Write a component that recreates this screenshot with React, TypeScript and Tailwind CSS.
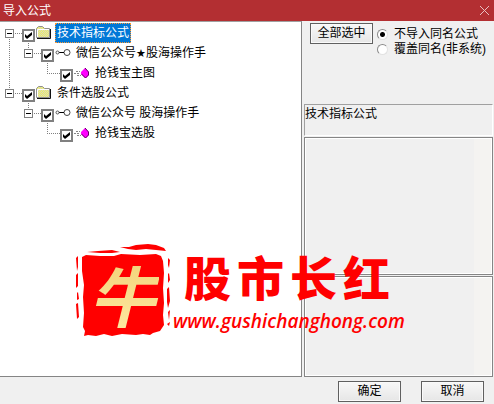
import { useState } from "react";

type NodeKind = "folder" | "group" | "formula";

interface Row {
  id: string;
  depth: number;
  kind: NodeKind;
  label: string;
  guide: boolean;
  up: boolean;
  down: boolean;
}

const rows: Row[] = [
  { id: "tech", depth: 0, kind: "folder", label: "技术指标公式", guide: false, up: false, down: true },
  { id: "tech-group", depth: 1, kind: "group", label: "微信公众号★股海操作手", guide: true, up: true, down: false },
  { id: "tech-main", depth: 2, kind: "formula", label: "抢钱宝主图", guide: true, up: true, down: false },
  { id: "cond", depth: 0, kind: "folder", label: "条件选股公式", guide: false, up: true, down: false },
  { id: "cond-group", depth: 1, kind: "group", label: "微信公众号 股海操作手", guide: false, up: true, down: false },
  { id: "cond-pick", depth: 2, kind: "formula", label: "抢钱宝选股", guide: false, up: true, down: false },
];

const dotted = { stroke: "#808080", strokeDasharray: "1 1", shapeRendering: "crispEdges" as const };

function Guide({ line }: { line: boolean }) {
  return (
    <svg className="w-[19px] h-5 shrink-0" viewBox="0 0 19 20" aria-hidden="true">
      {line && <path d="M9.5 0V20" {...dotted} />}
    </svg>
  );
}

function Branch({ row }: { row: Row }) {
  const leaf = row.kind === "formula";
  return (
    <svg className="w-[22px] h-5 shrink-0" viewBox="0 0 22 20" aria-hidden="true">
      {row.up && <path d="M9.5 0V10" {...dotted} />}
      {row.down && <path d="M9.5 10V20" {...dotted} />}
      <path d="M9 10.5H22" {...dotted} />
      {!leaf && (
        <g shapeRendering="crispEdges">
          <rect x="5.5" y="6.5" width="8" height="8" fill="#fff" stroke="#808080" />
          <path d="M7 10.5H12" stroke="#000" />
        </g>
      )}
    </svg>
  );
}

function FolderIcon() {
  return (
    <svg className="w-4 h-5" viewBox="0 0 16 20" aria-hidden="true">
      <defs>
        <pattern id="weave" width="2" height="2" patternUnits="userSpaceOnUse">
          <rect width="2" height="2" fill="#d6d6c8" />
          <rect width="1" height="1" fill="#f2f25a" />
          <rect x="1" y="1" width="1" height="1" fill="#f2f25a" />
        </pattern>
      </defs>
      <path d="M0.5 14.5V5.5L2.5 3.5H6.5L8.5 5.5H13.5V14.5Z" fill="url(#weave)" stroke="#909090" />
      <path d="M1.5 14V6.5H13" stroke="#fff" fill="none" />
      <path d="M1 15.5H14.5V6" stroke="#111" fill="none" />
    </svg>
  );
}

function GroupIcon() {
  return (
    <svg className="w-4 h-5" viewBox="0 0 16 20" fill="none" aria-hidden="true">
      <circle cx="12" cy="9.5" r="3" stroke="#444" />
      <path d="M4 9.5H9" stroke="#000" />
      <circle cx="2.5" cy="9.5" r="1.5" stroke="#555" />
    </svg>
  );
}

function FormulaIcon() {
  return (
    <svg className="w-4 h-5" viewBox="0 0 16 20" aria-hidden="true">
      <path d="M2 8.5H6M0 10.5H6M3 12.5H7" stroke="#858585" strokeDasharray="2 1" />
      <path d="M11 5L15 9V12L12 15H11L7 11V9Z" fill="#f0f" />
      <path d="M11 5L14.5 9V12L11.5 15L7.5 11" stroke="#600060" fill="none" />
    </svg>
  );
}

const icons = { folder: FolderIcon, group: GroupIcon, formula: FormulaIcon };

function Tick({ id }: { id: string }) {
  return (
    <span className="mt-[6px] grid size-[13px] shrink-0">
      <input
        id={id}
        type="checkbox"
        defaultChecked
        className="peer [grid-area:1/1] size-[13px] appearance-none border-2 border-[#808080] bg-white"
      />
      <svg
        className="pointer-events-none invisible [grid-area:1/1] size-[13px] peer-checked:visible"
        viewBox="0 0 13 13"
        aria-hidden="true"
      >
        <path d="M3 5L5 7L10 3V6L5 10L3 8Z" fill="#000" />
      </svg>
    </span>
  );
}

function Label({ row, selected }: { row: Row; selected: boolean }) {
  const parts = row.label.split("★");
  return (
    <label
      htmlFor={row.id}
      className={
        selected
          ? "ml-[3px] h-5 whitespace-pre border border-dotted border-[#ff9a32] bg-[#0078d7] px-px leading-[18px] text-white"
          : "ml-[5px] h-5 whitespace-pre leading-5"
      }
    >
      {parts[0]}
      {parts.length > 1 && <span className="font-['DejaVu_Sans'] text-[11px]">★</span>}
      {parts[1]}
    </label>
  );
}

function Tree() {
  return (
    <ul className="pt-px">
      {rows.map((row, i) => {
        const Icon = icons[row.kind];
        return (
          <li key={row.id} className="flex h-5 items-start">
            {row.depth > 0 && <Guide line={row.guide} />}
            {row.depth > 1 && <Guide line={false} />}
            <Branch row={row} />
            <Tick id={row.id} />
            <span className="ml-px shrink-0">
              <Icon />
            </span>
            <Label row={row} selected={i === 0} />
          </li>
        );
      })}
    </ul>
  );
}

const buttonStyle =
  "h-[21px] w-[63px] border border-[#606060] bg-linear-to-b from-[#f8f8f8] to-[#e6e6e6] leading-[19px] shadow-[inset_0_0_0_1px_#fafafa]";

const radioStyle =
  "size-[11px] appearance-none rounded-full border border-[#8a8a8a] border-r-[#e2e2e2] border-b-[#e2e2e2] bg-white checked:bg-[radial-gradient(circle,#000_2px,#fff_3px)]";

function Pane({ className }: { className: string }) {
  return (
    <div className={`flex justify-end border border-[#858585] ${className}`}>
      <div className="flex flex-1 justify-end border border-white">
        <div className="w-[17px] bg-[#f4f3f1]" />
      </div>
    </div>
  );
}

function Watermark() {
  return (
    <div className="pointer-events-none absolute left-[76px] top-[243px] flex text-[#ff0000]">
      <div className="grid h-[95px] w-[96px] place-items-center">
        <svg className="[grid-area:1/1] h-[95px] w-[96px]" viewBox="0 0 96 95" fill="#f00" aria-hidden="true">
          <path d="M6 14L10 12L24 13L38 13L45 11L64 12L80 11L85 13L87 18L88 30L87 45L88 60L87 72L88 82L84 88L77 90L74 92L67 91L60 92L46 91L36 93L28 91L20 93L12 92L8 93L9 88L7 84L8 70L7 54L8 42L6 28Z" />
          <path d="M44 4L53 4L60 2L72 1L80 2L88 5L90 8L80 7L70 6L60 7L52 6ZM11 9L22 8L36 7L44 9L36 10L24 10Z" />
          <path d="M0 15L2 13V24L1 28ZM0 32L2 30V43L0 45ZM1 50L2 49L3 56L1 57ZM0 61L2 60L3 74L1 76Z" />
          <path d="M92 15L94 17L93 25L92 22ZM92 31L93 30L94 37L92 40ZM91 46L93 44L94 58L92 65L91 59ZM92 69L94 67L93 77ZM91 81L94 79L93 83Z" />
        </svg>
        <span className="[grid-area:1/1] bg-linear-to-b from-[#f0cf70] to-[#ffe9a4] bg-clip-text pt-1 pr-1 font-['Noto_Sans_CJK_SC',sans-serif] text-[66px] font-bold italic leading-[88px] text-transparent">
          牛
        </span>
      </div>
      <div className="pt-[10px]">
        <div className="flex gap-[6px] pl-3 text-[47px] font-black leading-[54px]">
          <span>股</span>
          <span>市</span>
          <span>长</span>
          <span>红</span>
        </div>
        <div className="pl-px font-['Open_Sans',sans-serif] text-[19px] font-semibold italic leading-7">
          www.gushichanghong.com
        </div>
      </div>
    </div>
  );
}

export default function App() {
  const [mode, setMode] = useState("skip");
  return (
    <div className="relative flex min-h-screen flex-col bg-[#f0f0f0] font-['Liberation_Sans','Noto_Sans_CJK_SC',sans-serif] text-xs text-black">
      <header className="flex h-[21px] items-center justify-between bg-[#b32f32] pl-[3px] pr-[5px] text-white">
        <h1 className="leading-5">导入公式</h1>
        <button type="button" aria-label="关闭">
          <svg className="size-[9px]" viewBox="0 0 9 9" stroke="#e8bfc0" aria-hidden="true">
            <path d="M0 0L9 9M9 0L0 9" />
          </svg>
        </button>
      </header>
      <main className="flex flex-1">
        <section className="flex-1 border-b border-r border-t border-[#858585] border-t-[#a0a0a0] bg-white">
          <Tree />
        </section>
        <section className="ml-[2px] flex w-[190px] shrink-0 flex-col pr-px">
          <div className="flex h-[83px] items-start pl-[6px] pt-[2px]">
            <button type="button" className={buttonStyle}>
              全部选中
            </button>
            <fieldset className="ml-1 pt-[4px]">
              <label className="flex h-[15px] items-center gap-[6px] whitespace-nowrap leading-[15px]">
                <input type="radio" name="mode" checked={mode === "skip"} onChange={() => setMode("skip")} className={radioStyle} />
                不导入同名公式
              </label>
              <label className="flex h-[15px] items-center gap-[6px] whitespace-nowrap leading-[15px]">
                <input type="radio" name="mode" checked={mode === "replace"} onChange={() => setMode("replace")} className={radioStyle} />
                覆盖同名(非系统)
              </label>
            </fieldset>
          </div>
          <div className="h-8 border border-[#a0a0a0] border-b-white border-r-white leading-[18px]">技术指标公式</div>
          <Pane className="mt-px h-[138px]" />
          <Pane className="mt-px flex-1" />
        </section>
      </main>
      <footer className="flex h-[27px] items-start justify-end gap-5 pr-[10px] pt-1">
        <button type="button" className={buttonStyle}>
          确定
        </button>
        <button type="button" className={buttonStyle}>
          取消
        </button>
      </footer>
      <Watermark />
    </div>
  );
}
